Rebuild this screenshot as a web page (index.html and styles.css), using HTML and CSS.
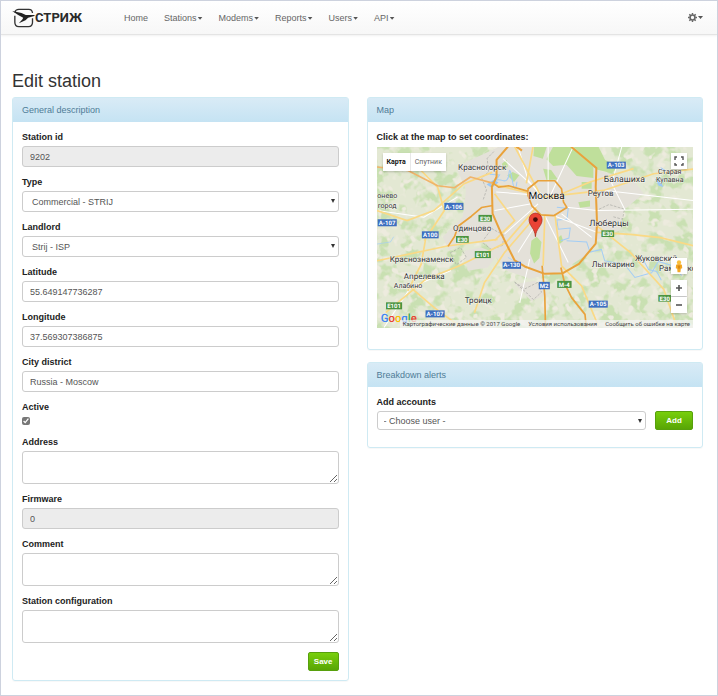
FILE: index.html
```
<!DOCTYPE html>
<html lang="en">
<head>
    <meta charset="UTF-8">
    <meta name="viewport" content="width=device-width, initial-scale=1.0">
    <title>Edit station</title>
    <link rel="stylesheet" href="styles.css">
</head>
<body>
    <header class="navbar">
        <a href="#" class="brand">
            <svg class="brand-icon" viewBox="36 27 68 60" aria-hidden="true">
                <path d="M44 40q2-9 12-9h30q10 0 11 11M97 58v12q0 13-12 13H56q-12 0-12-13V50" fill="none" stroke="#333" stroke-width="4"/>
                <path d="M36 36l28 6 13 6 27 0-2 3-18 5-8 8-20 9 11-12 2-5-15-8z" fill="#222"/>
            </svg>
            <span>СТРИЖ</span>
        </a>
        <nav class="nav">
            <a href="#">Home</a>
            <a href="#" class="dropdown">Stations</a>
            <a href="#" class="dropdown">Modems</a>
            <a href="#" class="dropdown">Reports</a>
            <a href="#" class="dropdown">Users</a>
            <a href="#" class="dropdown">API</a>
        </nav>
        <a href="#" class="dropdown settings" aria-label="Settings">
            <svg class="gear" viewBox="0 0 16 16" aria-hidden="true">
                <circle cx="8" cy="8" r="4.3" fill="none" stroke="#666" stroke-width="2.8"/>
                <path d="M8 0v3M8 13v3M0 8h3M13 8h3M2.4 2.4l2 2M11.6 11.6l2 2M2.4 13.6l2-2M11.6 4.4l2-2" stroke="#666" stroke-width="2.6"/>
            </svg>
        </a>
    </header>

    <main class="container">
        <h1>Edit station</h1>
        <div class="columns">
            <section class="panel">
                <h2 class="panel-heading">General description</h2>
                <form class="panel-body">
                    <div class="form-group">
                        <label for="station-id">Station id</label>
                        <input type="text" id="station-id" class="form-control" value="9202" disabled>
                    </div>
                    <div class="form-group">
                        <label for="type">Type</label>
                        <div class="select-wrap">
                            <select id="type" class="form-control"><option>Commercial - STRIJ</option></select>
                        </div>
                    </div>
                    <div class="form-group">
                        <label for="landlord">Landlord</label>
                        <div class="select-wrap">
                            <select id="landlord" class="form-control"><option>Strij - ISP</option></select>
                        </div>
                    </div>
                    <div class="form-group">
                        <label for="latitude">Latitude</label>
                        <input type="text" id="latitude" class="form-control" value="55.649147736287">
                    </div>
                    <div class="form-group">
                        <label for="longitude">Longitude</label>
                        <input type="text" id="longitude" class="form-control" value="37.569307386875">
                    </div>
                    <div class="form-group">
                        <label for="district">City district</label>
                        <input type="text" id="district" class="form-control" value="Russia - Moscow">
                    </div>
                    <div class="form-group">
                        <label for="active">Active</label>
                        <input type="checkbox" id="active" class="checkbox" checked>
                    </div>
                    <div class="form-group">
                        <label for="address">Address</label>
                        <textarea id="address" class="form-control"></textarea>
                    </div>
                    <div class="form-group">
                        <label for="firmware">Firmware</label>
                        <input type="text" id="firmware" class="form-control" value="0" disabled>
                    </div>
                    <div class="form-group">
                        <label for="comment">Comment</label>
                        <textarea id="comment" class="form-control"></textarea>
                    </div>
                    <div class="form-group">
                        <label for="configuration">Station configuration</label>
                        <textarea id="configuration" class="form-control"></textarea>
                    </div>
                    <div class="form-actions">
                        <button type="submit" class="btn">Save</button>
                    </div>
                </form>
            </section>

            <div class="side">
                <section class="panel panel-map">
                    <h2 class="panel-heading">Map</h2>
                    <div class="panel-body">
                        <h3 class="label">Click at the map to set coordinates:</h3>
                        <div class="map">
                            <svg class="map-canvas" viewBox="9 9 945 543" preserveAspectRatio="xMidYMid slice" role="img" aria-label="Moscow region">
                                <defs>
                                    <filter id="forest" x="0" y="0" width="1" height="1" color-interpolation-filters="sRGB">
                                        <feTurbulence type="fractalNoise" baseFrequency="0.022" numOctaves="3" seed="7"/>
                                        <feColorMatrix values="0 0 0 0 0.79  0 0 0 0 0.88  0 0 0 0 0.7  8 0 0 0 -4"/>
                                    </filter>
                                    <filter id="fields" x="0" y="0" width="1" height="1" color-interpolation-filters="sRGB">
                                        <feTurbulence type="fractalNoise" baseFrequency="0.04" numOctaves="2" seed="21"/>
                                        <feColorMatrix values="0 0 0 0 0.93  0 0 0 0 0.92  0 0 0 0 0.87  0 7 0 0 -4"/>
                                    </filter>
                                </defs>
                                <rect x="9" y="9" width="945" height="543" fill="#e3e8d3"/>
                                <rect x="9" y="9" width="945" height="543" filter="url(#forest)"/>
                                <rect x="9" y="9" width="945" height="543" filter="url(#fields)"/>

                                <!-- built-up area -->
                                <path d="M375 9h220l70 70 110 30 30 40-60 50-10 60-70 30-40 50-70 45-90 20-70-25-60-80-60-10-50 30-20-40 60-60 10-80-30-70z" fill="#e4e1d9"/>
                                <path d="M270 320l50-10 50 20-30 40-60 10zM420 420l60-10 40 40-50 20z" fill="#e4e1d9"/>

                                <!-- parks -->
                                <g fill="#bfdf9b">
                                    <path d="M535 9h60l60 60v34l-50-6-30-34-40 4-20-20zM478 9h38l-12 36-28-8zM620 115h30v20h-30zM610 175l35-5v18l-30 4zM470 290l16-12 14 16-6 48-16 16-12-30zM505 75l24 4 20 28-34 2zM398 95l16-10 20 10-16 20z"/>
                                    <path d="M595 9h75l20 40 40 20-20 20-48-12z"/>
                                    <path d="M545 285l14-12 6 18-14 12zM382 60l14-12 4 20-14 12z"/>
                                </g>

                                <!-- rivers -->
                                <g fill="none" stroke="#a3cdf5" stroke-width="3">
                                    <path d="M345 118q20-15 38-8t20-20 10 20 14 4M345 92l30 2-14 20M546 190l34 4-4 32-30 2 4 28 36-4-4 30-24 8M575 290l60 4 10 30 34-8 10 34 60 12 30 38 50-14 20-34 40 12 30 30M770 330l20 24 14-6 16 28 24 6 14 26"/>
                                    <path d="M9 300l40-6 10-16M400 340l14 8" stroke-width="2"/>
                                </g>
                                <path d="M336 122l22-14 14 8-20 16zM838 104l18 10 8 16-14-4zM855 70l14 8-2 14z" fill="#9cc8f5"/>

                                <!-- district borders -->
                                <g fill="none" stroke="#a9a9a5" stroke-width="2" stroke-dasharray="8 4">
                                    <path d="M358 24l-20 20 4 40-20 20 14 34-10 30M322 294l30-40 36 20-4 30-34 12zM228 326l30-16 18 30-30 22zM672 196l30-14 46 14-6 30-30-8M420 414l30 20 40-20 10 30-24 22-20-20z"/>
                                </g>

                                <!-- minor roads -->
                                <g fill="none" stroke="#fff" stroke-width="3">
                                    <path d="M430 9l30 100 40 50M385 45l120 110M520 9v150M595 9l-70 150M365 145l140 10M360 200l110-20M390 270l100-90M575 190l90 10 290-4M560 210l90 70M500 215l-70 110M510 215l70 140M535 215l130 50M465 345l-30 130M690 140l264 30M740 9l-30 110 40 80M9 200l140 20 100-60M30 549l80-120 120-50"/>
                                </g>

                                <!-- highways -->
                                <g fill="none" stroke="#fad985" stroke-width="5">
                                    <path d="M420 9l80 150M350 120l120 30M525 165l120-50 130-40M505 160l180-20 150-50 119-14M510 215l-5 150M540 210l20 155M485 190l-90 105-140 70-100 40-120 100M9 350l210-44 150-20M485 215l-95 110-60 90-30 90M110 430l70 60 80 59M665 265l100 6 90 10 99 24M665 245l100 80 100 110 40 114M560 365l60 60 50 120M9 200l90 30 80-30 90-80 84-34M155 280l-14 80-40 80M30 30l100 40 60 60 20 70-60 90M360 150l60 80-60 60M475 9l-20 110"/>
                                </g>

                                <!-- ring roads -->
                                <g fill="none" stroke="#e9a23b" stroke-width="6" stroke-linejoin="round">
                                    <path d="M400 9l-34 40v50l-14 30 2 80 26 60 40 80 30 18 60 22 54-2 48-28 50-60 4-60-4-110 2-56-76-64M425 9l17 12"/>
                                    <path d="M460 135l30-24h50l20 24 6 40 10 16-38 24-40-2-26-26-12-32zM352 115l20 15 30-4 56 16" stroke-width="5"/>
                                    <path d="M502 365l8 90 2 94M558 370l12 50 20 40 40 50 4 39M355 185l-34 6-30 26-40 30-10 30-20 30" stroke-width="5"/>
                                    <path d="M9 70l91 10 90 46 50 6 48-32 66 18" stroke="#f0b46a" stroke-width="5"/>
                                </g>

                                <g class="road-sign blue">
                                    <rect x="210" y="177" width="57" height="21"/><text x="238" y="194">A-106</text>
                                    <rect x="11" y="226" width="57" height="21"/><text x="39" y="243">A-107</text>
                                    <rect x="143" y="262" width="50" height="21"/><text x="168" y="279">A100</text>
                                    <rect x="384" y="353" width="55" height="21"/><text x="411" y="370">A-130</text>
                                    <rect x="492" y="413" width="33" height="22"/><text x="508" y="431">M2</text>
                                    <rect x="641" y="469" width="57" height="21"/><text x="669" y="486">A-105</text>
                                    <rect x="154" y="498" width="57" height="21"/><text x="182" y="515">A-107</text>
                                    <rect x="695" y="54" width="57" height="21"/><text x="723" y="71">A-103</text>
                                </g>
                                <g class="road-sign green">
                                    <rect x="312" y="213" width="40" height="20"/><text x="332" y="230">E30</text>
                                    <rect x="245" y="276" width="38" height="20"/><text x="264" y="293">E30</text>
                                    <rect x="301" y="321" width="48" height="21"/><text x="325" y="338">E101</text>
                                    <rect x="547" y="410" width="43" height="21"/><text x="568" y="427">M-4</text>
                                    <rect x="679" y="259" width="38" height="20"/><text x="698" y="276">E30</text>
                                    <rect x="849" y="452" width="38" height="20"/><text x="868" y="469">E30</text>
                                    <rect x="36" y="474" width="48" height="21"/><text x="60" y="491">E101</text>
                                </g>

                                <g class="town">
                                    <text x="251" y="80">Красногорск</text>
                                    <text x="236" y="260">Одинцово</text>
                                    <text x="638" y="156">Реутов</text>
                                    <text x="686" y="114" class="large">Балашиха</text>
                                    <text x="643" y="245" class="large">Люберцы</text>
                                    <text x="461" y="166" class="city">Москва</text>
                                    <text x="47" y="354">Краснознаменск</text>
                                    <text x="89" y="405">Апрелевка</text>
                                    <text x="59" y="432" class="small">Алабино</text>
                                    <text x="271" y="477">Троицк</text>
                                    <text x="650" y="368">Лыткарино</text>
                                    <text x="779" y="350">Жуковский</text>
                                    <text x="851" y="381">Раменское</text>
                                    <text x="848" y="92" class="small">Старая</text>
                                    <text x="842" y="114" class="small">Купавна</text>
                                    <text x="10" y="164" class="small">онево</text>
                                    <text x="11" y="191" class="small">город</text>
                                </g>

                                <!-- marker -->
                                <path d="M482 278c-2-26-19-31-19-51a19 19 0 0 1 39 0c0 20-18 25-20 51z" fill="#ea4335" stroke="#a52714" stroke-width="2"/>
                                <circle cx="482" cy="227" r="7" fill="#4a0d0a"/>

                                <text x="20" y="534" class="google"><tspan fill="#4285f4">G</tspan><tspan fill="#ea4335">o</tspan><tspan fill="#fbbc05">o</tspan><tspan fill="#4285f4">g</tspan><tspan fill="#34a853">l</tspan><tspan fill="#ea4335">e</tspan></text>
                            </svg>
                            <div class="map-type">
                                <button type="button" class="active">Карта</button>
                                <button type="button">Спутник</button>
                            </div>
                            <button type="button" class="map-btn fullscreen" aria-label="Fullscreen">
                                <svg viewBox="0 0 10 10" aria-hidden="true">
                                    <path d="M1 4V1h2M7 1h2v3M9 7v2H7M3 9H1V7" fill="none" stroke="#555" stroke-width="1.4"/>
                                </svg>
                            </button>
                            <div class="map-tools">
                                <button type="button" class="map-btn" aria-label="Street view">
                                    <svg class="pegman" viewBox="0 0 24 36" aria-hidden="true">
                                        <path d="M4 13q8-4 16 0l1 10-4 1-1 10H8L7 24l-4-1z" fill="#f4a825"/>
                                        <path d="M8 15h8l-2 9h-4z" fill="#d98a12"/>
                                        <circle cx="12" cy="7" r="6" fill="#fbbf3b"/>
                                    </svg>
                                </button>
                                <div class="map-zoom">
                                    <button type="button" class="map-btn" aria-label="Zoom in">
                                        <svg viewBox="0 0 10 10" aria-hidden="true"><path d="M2 5h6M5 2v6" stroke="#555" stroke-width="1.6"/></svg>
                                    </button>
                                    <button type="button" class="map-btn" aria-label="Zoom out">
                                        <svg viewBox="0 0 10 10" aria-hidden="true"><path d="M2 5h6" stroke="#555" stroke-width="1.6"/></svg>
                                    </button>
                                </div>
                            </div>
                            <div class="map-footer">
                                <span>Картографические данные © 2017 Google</span>
                                <a href="#">Условия использования</a>
                                <a href="#">Сообщить об ошибке на карте</a>
                            </div>
                        </div>
                    </div>
                </section>

                <section class="panel panel-alerts">
                    <h2 class="panel-heading">Breakdown alerts</h2>
                    <form class="panel-body">
                        <label for="account">Add accounts</label>
                        <div class="add-row">
                            <div class="select-wrap">
                                <select id="account" class="form-control"><option>- Choose user -</option></select>
                            </div>
                            <button type="button" class="btn btn-wide">Add</button>
                        </div>
                    </form>
                </section>
            </div>
        </div>
    </main>
</body>
</html>
```
FILE: styles.css
```
* {
    box-sizing: border-box;
}
body {
    margin: 0;
    min-height: 100vh;
    border: 1px solid #cdd2de;
    background: #fff;
    color: #333;
    font-family: "Liberation Sans", Arial, sans-serif;
    font-size: 9px;
    line-height: 12px;
}
a {
    color: inherit;
    text-decoration: none;
}
button, input, select, textarea {
    font-family: inherit;
}

/* Navbar */
.navbar {
    display: flex;
    align-items: center;
    height: 34px;
    padding: 0 14px 0 11px;
    border-bottom: 1px solid #e4e4e4;
    background: linear-gradient(#fff, #f7f7f7);
    box-shadow: 0 1px 2px rgba(0, 0, 0, 0.06);
    color: #666;
}
.brand {
    display: flex;
    align-items: center;
    width: 104px;
    color: #2b2b2b;
    font-family: Roboto, sans-serif;
    font-size: 13px;
    font-weight: 700;
}
.brand-icon {
    width: 23px;
    height: 20px;
}
.nav {
    display: flex;
    flex: 1;
}
.nav a {
    padding: 0 8px;
}
.dropdown::after {
    content: "";
    display: inline-block;
    width: 5px;
    height: 3px;
    margin-left: 1px;
    background: #555;
    clip-path: polygon(0 0, 100% 0, 50% 100%);
    vertical-align: middle;
}
.settings {
    display: flex;
    align-items: center;
}
.gear {
    width: 9px;
    height: 9px;
}

/* Layout */
.container {
    padding: 36px 14px 14px 11px;
}
h1 {
    margin: 0 0 6px;
    font-size: 18px;
    font-weight: 400;
    line-height: 20px;
}
.columns {
    display: grid;
    grid-template-columns: 1fr 1fr;
    align-items: start;
    gap: 18px;
}
.side {
    display: grid;
    gap: 12px;
}

/* Panels */
.panel {
    border: 1px solid #cfeaf3;
    border-radius: 3px;
    box-shadow: 0 1px 1px rgba(0, 0, 0, 0.03);
}
.panel-heading {
    margin: 0;
    padding: 6px 9px;
    background: linear-gradient(#d9ebf6, #c5e3f3);
    color: #4f7c97;
    font-size: 9px;
    font-weight: 400;
}
.panel-body {
    padding: 9px;
}
.panel-map .panel-body {
    padding-bottom: 21px;
}
.panel-alerts .panel-body {
    padding-bottom: 17px;
}

/* Forms */
label, .label {
    display: block;
    margin: 0 0 3px;
    color: #222;
    font-size: 9px;
    font-weight: 700;
}
.label {
    margin-bottom: 4px;
}
.form-group {
    margin-bottom: 9px;
}
.form-control {
    display: block;
    width: 100%;
    height: 21px;
    padding: 0 7px;
    border: 1px solid #ccc;
    border-radius: 3px;
    background: #fff;
    color: #555;
    font-size: 9px;
}
.form-control:disabled {
    background: #ececec;
}
textarea.form-control {
    height: 33px;
    resize: vertical;
}
.select-wrap {
    position: relative;
}
select.form-control {
    padding: 0 9px;
    appearance: none;
}
.select-wrap::after {
    content: "";
    position: absolute;
    top: 8px;
    right: 4px;
    border: 2px solid transparent;
    border-top: 4px solid #333;
    border-bottom: 0;
    pointer-events: none;
}
.checkbox {
    display: block;
    width: 8px;
    height: 8px;
    margin: 4px 0 11px;
    accent-color: #777;
}
.form-actions {
    display: flex;
    justify-content: flex-end;
}
.btn {
    height: 19px;
    padding: 0 5px;
    border: 1px solid #57a00c;
    border-radius: 2px;
    background: linear-gradient(#78cf0c, #58a505);
    color: #fff;
    font-size: 8px;
    font-weight: 700;
}
.btn-wide {
    width: 38px;
}
.add-row {
    display: flex;
    gap: 9px;
}
.add-row .select-wrap {
    flex: 1;
}
.add-row .form-control {
    height: 19px;
    padding: 0 6px;
}

/* Map */
.map {
    position: relative;
    height: 181px;
    overflow: hidden;
    font-family: Roboto, sans-serif;
}
.map-canvas {
    display: block;
    width: 100%;
    height: 100%;
    text-rendering: geometricPrecision;
}
.road-sign text {
    fill: #fff;
    font-size: 18px;
    font-weight: 700;
    text-anchor: middle;
}
.blue rect {
    fill: #3d6fc0;
}
.green rect {
    fill: #4b9440;
}
.town text {
    fill: #333;
    stroke: #fff;
    stroke-width: 3px;
    stroke-opacity: 0.7;
    paint-order: stroke;
    font-size: 24px;
}
.town .small {
    font-size: 21px;
}
.town .large {
    font-size: 26px;
}
.town .city {
    fill: #111;
    font-size: 30px;
}
.google {
    font-size: 34px;
    font-weight: 500;
}
.map button {
    padding: 0;
    border: 0;
    background: #fff;
}
.map-type {
    position: absolute;
    top: 6px;
    left: 6px;
    display: flex;
    height: 18px;
    box-shadow: 0 1px 2px rgba(0, 0, 0, 0.2);
}
.map .map-type button {
    padding: 0 4px;
    color: #666;
    font-size: 7px;
}
.map .map-type .active {
    border-right: 1px solid #e8e8e8;
    color: #111;
    font-weight: 700;
}
.map-btn {
    display: flex;
    align-items: center;
    justify-content: center;
    width: 16px;
    height: 16px;
    box-shadow: 0 1px 2px rgba(0, 0, 0, 0.2);
}
.map-btn svg {
    width: 10px;
    height: 10px;
}
.map-btn .pegman {
    height: 13px;
}
.fullscreen {
    position: absolute;
    top: 6px;
    right: 6px;
}
.map-tools {
    position: absolute;
    right: 6px;
    bottom: 15px;
    display: grid;
    gap: 6px;
}
.map-zoom {
    display: grid;
    gap: 1px;
    background: #e8e8e8;
}
.map-footer {
    position: absolute;
    right: 0;
    bottom: 0;
    display: flex;
    gap: 8px;
    padding: 0 3px;
    background: rgba(245, 245, 245, 0.7);
    color: #444;
    font-size: 6px;
    line-height: 8px;
    white-space: nowrap;
}
```
